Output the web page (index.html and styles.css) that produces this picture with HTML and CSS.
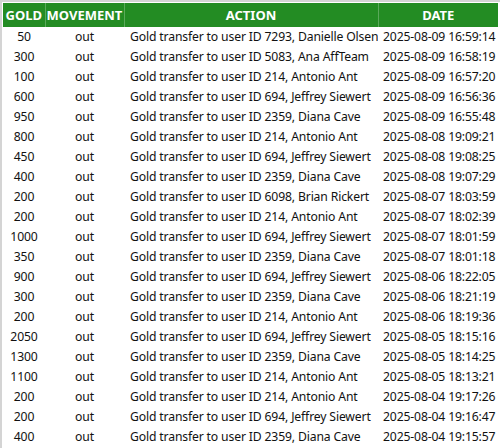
FILE: index.html
```html
<!DOCTYPE html>
<html>
<head>
<meta charset="utf-8">
<link rel="stylesheet" href="styles.css">
</head>
<body>
<div class="frame">
<table class="log">
<colgroup><col class="c-gold"><col class="c-mov"><col class="c-act"><col class="c-date"></colgroup>
<thead>
<tr><th>GOLD</th><th>MOVEMENT</th><th>ACTION</th><th>DATE</th></tr>
</thead>
<tbody>
<tr><td class="num">50</td><td class="mov">out</td><td class="act">Gold transfer to user ID 7293, Danielle Olsen</td><td class="date">2025-08-09 16:59:14</td></tr>
<tr><td class="num">300</td><td class="mov">out</td><td class="act">Gold transfer to user ID 5083, Ana AffTeam</td><td class="date">2025-08-09 16:58:19</td></tr>
<tr><td class="num">100</td><td class="mov">out</td><td class="act">Gold transfer to user ID 214, Antonio Ant</td><td class="date">2025-08-09 16:57:20</td></tr>
<tr><td class="num">600</td><td class="mov">out</td><td class="act">Gold transfer to user ID 694, Jeffrey Siewert</td><td class="date">2025-08-09 16:56:36</td></tr>
<tr><td class="num">950</td><td class="mov">out</td><td class="act">Gold transfer to user ID 2359, Diana Cave</td><td class="date">2025-08-09 16:55:48</td></tr>
<tr><td class="num">800</td><td class="mov">out</td><td class="act">Gold transfer to user ID 214, Antonio Ant</td><td class="date">2025-08-08 19:09:21</td></tr>
<tr><td class="num">450</td><td class="mov">out</td><td class="act">Gold transfer to user ID 694, Jeffrey Siewert</td><td class="date">2025-08-08 19:08:25</td></tr>
<tr><td class="num">400</td><td class="mov">out</td><td class="act">Gold transfer to user ID 2359, Diana Cave</td><td class="date">2025-08-08 19:07:29</td></tr>
<tr><td class="num">200</td><td class="mov">out</td><td class="act">Gold transfer to user ID 6098, Brian Rickert</td><td class="date">2025-08-07 18:03:59</td></tr>
<tr><td class="num">200</td><td class="mov">out</td><td class="act">Gold transfer to user ID 214, Antonio Ant</td><td class="date">2025-08-07 18:02:39</td></tr>
<tr><td class="num">1000</td><td class="mov">out</td><td class="act">Gold transfer to user ID 694, Jeffrey Siewert</td><td class="date">2025-08-07 18:01:59</td></tr>
<tr><td class="num">350</td><td class="mov">out</td><td class="act">Gold transfer to user ID 2359, Diana Cave</td><td class="date">2025-08-07 18:01:18</td></tr>
<tr><td class="num">900</td><td class="mov">out</td><td class="act">Gold transfer to user ID 694, Jeffrey Siewert</td><td class="date">2025-08-06 18:22:05</td></tr>
<tr><td class="num">300</td><td class="mov">out</td><td class="act">Gold transfer to user ID 2359, Diana Cave</td><td class="date">2025-08-06 18:21:19</td></tr>
<tr><td class="num">200</td><td class="mov">out</td><td class="act">Gold transfer to user ID 214, Antonio Ant</td><td class="date">2025-08-06 18:19:36</td></tr>
<tr><td class="num">2050</td><td class="mov">out</td><td class="act">Gold transfer to user ID 694, Jeffrey Siewert</td><td class="date">2025-08-05 18:15:16</td></tr>
<tr><td class="num">1300</td><td class="mov">out</td><td class="act">Gold transfer to user ID 2359, Diana Cave</td><td class="date">2025-08-05 18:14:25</td></tr>
<tr><td class="num">1100</td><td class="mov">out</td><td class="act">Gold transfer to user ID 214, Antonio Ant</td><td class="date">2025-08-05 18:13:21</td></tr>
<tr><td class="num">200</td><td class="mov">out</td><td class="act">Gold transfer to user ID 214, Antonio Ant</td><td class="date">2025-08-04 19:17:26</td></tr>
<tr><td class="num">200</td><td class="mov">out</td><td class="act">Gold transfer to user ID 694, Jeffrey Siewert</td><td class="date">2025-08-04 19:16:47</td></tr>
<tr><td class="num">400</td><td class="mov">out</td><td class="act">Gold transfer to user ID 2359, Diana Cave</td><td class="date">2025-08-04 19:15:57</td></tr>
</tbody>
</table>
</div>
</body>
</html>
```
FILE: styles.css
```css
html, body {
  margin: 0;
  padding: 0;
  background: #fff;
}
.frame {
  border-left: 2px solid #d4d4d4;
  border-top: 2px solid #d4d4d4;
  padding: 1px 0 0 1px;
  width: 497px;
  height: 445px;
  overflow: hidden;
  box-sizing: content-box;
}
.log {
  border-collapse: collapse;
  table-layout: fixed;
  width: 495px;
  font-family: "Noto Sans", "Open Sans", sans-serif;
  font-size: 12.2px;
  letter-spacing: -0.15px;
  color: #111;
}
.c-gold { width: 42px; }
.c-mov { width: 79px; }
.c-act { width: 254px; }
.c-date { width: 120px; }
.log th {
  background: #238c23;
  color: #fff;
  font-weight: bold;
  font-size: 13px;
  letter-spacing: 0;
  height: 24px;
  padding: 0;
  text-align: center;
  border-left: 1px solid #5aa95a;
  white-space: nowrap;
}
.log th:first-child { border-left: none; }
.log td {
  height: 20px;
  padding: 0;
  white-space: nowrap;
  overflow: hidden;
  line-height: 20px;
}
.log td.num, .log td.mov { text-align: center; }
.log td.act { padding-left: 6px; }
.log td.date { padding-left: 5px; }
```
